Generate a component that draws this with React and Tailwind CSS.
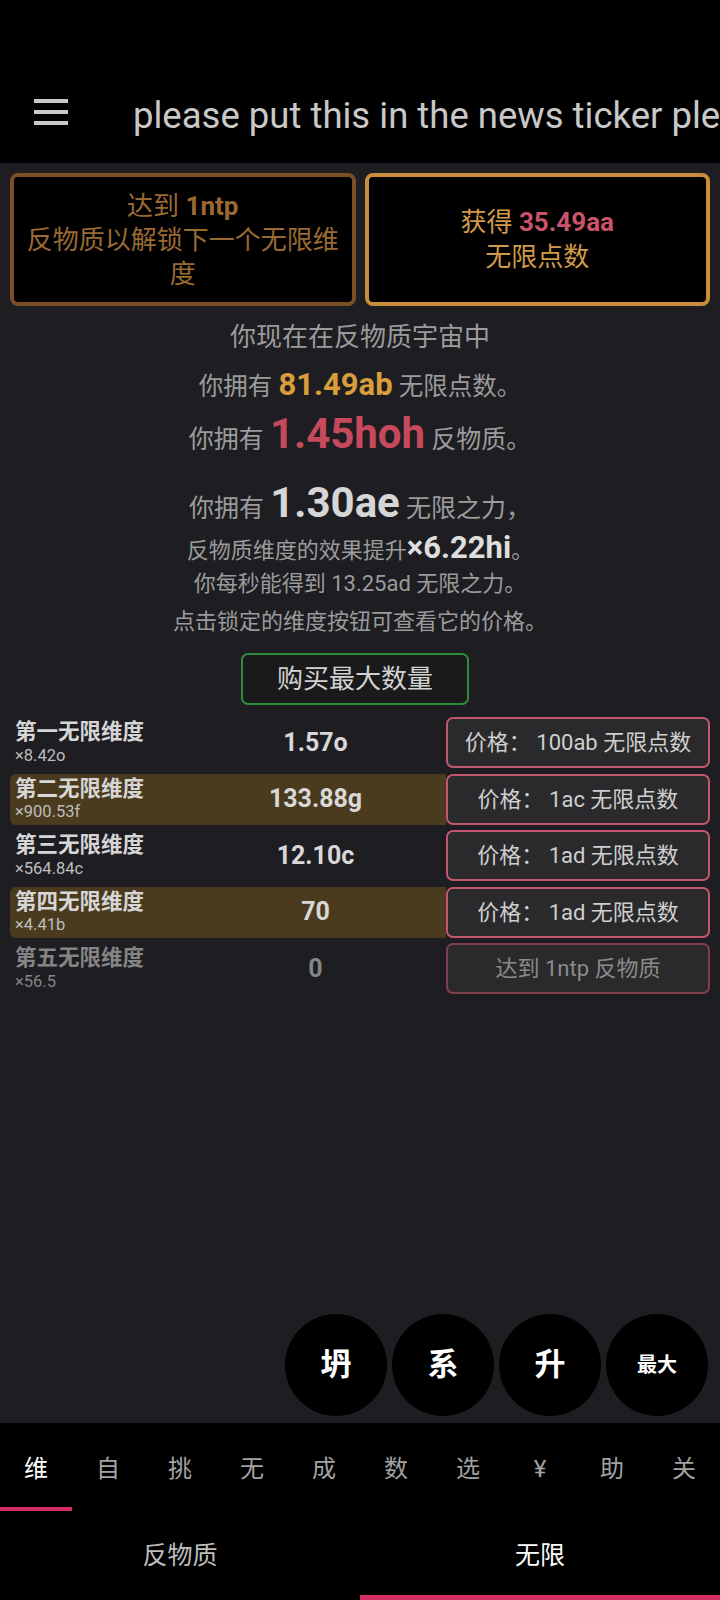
import React from 'react';

const FONT = 'font-["Roboto","Noto_Sans_CJK_SC",sans-serif]';

const dims = [
  { name: '第一无限维度', mult: '×8.42o', amount: '1.57o', price: '价格： 100ab 无限点数', hl: false, locked: false },
  { name: '第二无限维度', mult: '×900.53f', amount: '133.88g', price: '价格： 1ac 无限点数', hl: true, locked: false },
  { name: '第三无限维度', mult: '×564.84c', amount: '12.10c', price: '价格： 1ad 无限点数', hl: false, locked: false },
  { name: '第四无限维度', mult: '×4.41b', amount: '70', price: '价格： 1ad 无限点数', hl: true, locked: false },
  { name: '第五无限维度', mult: '×56.5', amount: '0', price: '达到 1ntp 反物质', hl: false, locked: true },
];

const tabs = ['维', '自', '挑', '无', '成', '数', '选', '¥', '助', '关'];

const DimRow = ({ d }) => (
  <div className="flex h-[51px]">
    <div className={`flex flex-1 items-center rounded-l-[6px] pl-[5px] ${d.hl ? 'bg-[#4b3b1e]' : ''}`}>
      <div className="flex w-[170px] flex-col leading-none">
        <span className={`text-[21.5px] font-bold ${d.locked ? 'text-[#858585]' : 'text-[#d6d6d6]'}`}>{d.name}</span>
        <span className={`mt-[5px] text-[16.5px] ${d.locked ? 'text-[#858585]' : 'text-[#bdbdbd]'}`}>{d.mult}</span>
      </div>
      <div className={`flex-1 text-center text-[25px] font-bold ${d.locked ? 'text-[#858585]' : 'text-[#d8d8d8]'}`}>
        {d.amount}
      </div>
    </div>
    <button
      className={`flex w-[264px] items-center justify-center rounded-[7px] border-2 bg-[#2a2a2c] text-[22px] ${
        d.locked ? 'border-[#7e3f4e] text-[#8a8a8a]' : 'border-[#c2586f] text-[#cfcfcf]'
      }`}
    >
      {d.price}
    </button>
  </div>
);

export default function App() {
  return (
    <div className={`flex h-[1600px] w-[720px] flex-col overflow-hidden bg-[#1e1e22] ${FONT}`}>
      {/* Header */}
      <header className="h-[163px] shrink-0 bg-black pt-[62px]">
        <div className="flex h-[100px] items-center overflow-hidden">
          <div className="ml-[34px] flex w-[34px] shrink-0 flex-col gap-[7px]">
            <span className="h-[4px] bg-[#c8c8c8]" />
            <span className="h-[4px] bg-[#c8c8c8]" />
            <span className="h-[4px] bg-[#c8c8c8]" />
          </div>
          <div className="ml-[65px] whitespace-nowrap pt-[8px] text-[36.5px] text-[#c8c8c8]">
            please put this in the news ticker please put this in the news ticker
          </div>
        </div>
      </header>

      <main className="flex flex-1 flex-col">
        {/* Top boxes */}
        <div className="grid grid-cols-2 gap-[9px] px-[10px] pt-[10px]">
          <div className="flex h-[133px] flex-col items-center justify-center rounded-[8px] border-4 border-[#7a4f26] bg-black px-2 text-center text-[26px] leading-[34px] text-[#9a6a33]">
            <div>达到 <b>1ntp</b></div>
            <div>反物质以解锁下一个无限维度</div>
          </div>
          <div className="flex h-[133px] flex-col items-center justify-center rounded-[8px] border-4 border-[#c98d3c] bg-black text-center text-[26px] leading-[35px] text-[#d29a48]">
            <div>获得 <b className="text-[#c9546a]">35.49aa</b></div>
            <div>无限点数</div>
          </div>
        </div>

        {/* Stats */}
        <div className="flex flex-col items-center text-center text-[#9b9b9b]">
          <div className="mt-[13px] text-[26px] leading-[36px]">你现在在反物质宇宙中</div>
          <div className="mt-[5px] text-[24.5px] leading-[50px]">
            你拥有 <b className="text-[31px] text-[#d99e3b]">81.49ab</b> 无限点数。
          </div>
          <div className="-mt-[4px] text-[25px] leading-[52px]">
            你拥有 <b className="text-[42px] text-[#c64a5c]">1.45hoh</b> 反物质。
          </div>
          <div className="mt-[11px] text-[25px] leading-[52px]">
            你拥有 <b className="text-[42px] text-[#d6d6d6]">1.30ae</b> 无限之力，
          </div>
          <div className="-mt-[4px] text-[22px] leading-[34px]">
            反物质维度的效果提升<b className="text-[31px] text-[#dedede]">×6.22hi</b>。
          </div>
          <div className="-mt-[1px] text-[22px] leading-[34px]">你每秒能得到 13.25ad 无限之力。</div>
          <div className="mt-[4px] text-[22px] leading-[34px]">点击锁定的维度按钮可查看它的价格。</div>
          <button className="mr-[10px] mt-[14px] h-[52px] w-[228px] rounded-[7px] border-2 border-[#2e8b3c] bg-[#1a1a1b] text-[26px] text-[#d2d2d2]">
            购买最大数量
          </button>
        </div>

        {/* Dimensions */}
        <div className="mt-[12px] flex flex-col gap-[5.5px] px-[10px]">
          {dims.map((d) => (
            <DimRow key={d.name} d={d} />
          ))}
        </div>

        <div className="flex-1" />

        {/* Round buttons */}
        <div className="flex justify-end gap-[5px] pb-[7px] pr-[12px]">
          {['坍', '系', '升'].map((c) => (
            <button key={c} className="flex h-[102px] w-[102px] items-center justify-center rounded-full bg-black text-[31px] font-bold text-white">
              {c}
            </button>
          ))}
          <button className="flex h-[102px] w-[102px] items-center justify-center rounded-full bg-black text-[20px] font-bold text-white">
            最大
          </button>
        </div>
      </main>

      {/* Bottom nav */}
      <nav className="h-[177px] shrink-0 bg-black">
        <div className="flex h-[88px]">
          {tabs.map((t, i) => (
            <div key={t} className="flex w-[72px] flex-col">
              <div className={`flex flex-1 items-center justify-center pt-[8px] text-[24px] ${i === 0 ? 'text-white' : 'text-[#a3a3a3]'}`}>
                {t}
              </div>
              <div className={`h-[4px] ${i === 0 ? 'bg-[#d22e62]' : ''}`} />
            </div>
          ))}
        </div>
        <div className="flex h-[89px]">
          <div className="flex flex-1 flex-col">
            <div className="flex flex-1 items-center justify-center pt-[6px] text-[25px] text-[#bdbdbd]">反物质</div>
            <div className="h-[5px]" />
          </div>
          <div className="flex flex-1 flex-col">
            <div className="flex flex-1 items-center justify-center pt-[6px] text-[25px] text-white">无限</div>
            <div className="h-[5px] bg-[#d22e62]" />
          </div>
        </div>
      </nav>
    </div>
  );
}
